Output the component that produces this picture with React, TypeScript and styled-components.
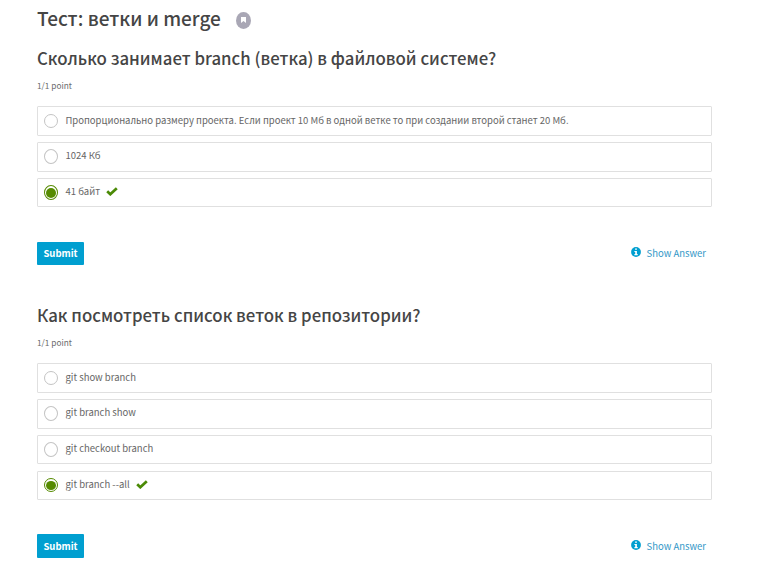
import React from "react";
import styled, { createGlobalStyle } from "styled-components";

const GlobalStyle = createGlobalStyle`
  * { box-sizing: border-box; }
  body {
    margin: 0;
    background: #fff;
    font-family: "Noto Sans CJK SC", "Noto Sans", sans-serif;
  }
  h2, h3, p { margin: 0; font-weight: 500; white-space: nowrap; }
`;

const Page = styled.main`
  width: 675px;
  margin-left: 37px;
`;
const TitleRow = styled.header`
  display: flex;
  align-items: center;
  height: 40px;
  gap: 15px;
`;
const Title = styled.h2`
  font-size: 19px;
  line-height: 36px;
  padding-bottom: 4px;
  color: #454545;
`;
const BookmarkBadge = styled.span`
  display: flex;
  align-items: center;
  justify-content: center;
  width: 15px;
  height: 17px;
  border-radius: 50%;
  background: #a9a7b5;
`;
const Problem = styled.section<{ $gap: number }>`
  padding-top: ${(p) => p.$gap}px;
`;
const Question = styled.h3`
  font-size: 16.8px;
  line-height: 27px;
  height: 27px;
  color: #454545;
  letter-spacing: 0.015px;
`;
const Points = styled.p`
  margin-top: 5px;
  height: 17px;
  font-size: 8.3px;
  line-height: 17px;
  font-weight: 400;
  color: #6c6c6c;
`;
const Choices = styled.div`
  display: flex;
  flex-direction: column;
  margin-top: 12px;
`;
const Choice = styled.label<{ $height: number }>`
  display: flex;
  align-items: center;
  height: ${(p) => p.$height}px;
  margin-bottom: ${(p) => 36 - p.$height}px;
  padding-left: 6px;
  border: 1px solid #e0e0e0;
  border-radius: 1px;
`;
const Radio = styled.span<{ $checked?: boolean; $height: number; $raise: number }>`
  display: flex;
  align-items: center;
  justify-content: center;
  width: 14px;
  height: ${(p) => p.$height}px;
  margin-bottom: ${(p) => p.$raise}px;
  flex: none;
  border: 1px solid ${(p) => (p.$checked ? "#568b00" : "#c4c4c4")};
  border-radius: 50%;
  &::after {
    content: "";
    width: 10px;
    height: ${(p) => p.$height - 5}px;
    border-radius: 50%;
    background: ${(p) => (p.$checked ? "#568b00" : "transparent")};
  }
`;
const ChoiceText = styled.span<{ $lift: number }>`
  margin-left: 7.5px;
  padding-bottom: ${(p) => p.$lift}px;
  font-size: 9.5px;
  line-height: 16px;
  color: #666;
  white-space: nowrap;
`;
const CheckSvg = styled.svg`
  margin-left: 6px;
  margin-bottom: 2px;
`;
const Actions = styled.footer<{ $gap: number }>`
  display: flex;
  align-items: center;
  justify-content: space-between;
  padding-right: 6px;
  margin-top: ${(p) => p.$gap}px;
`;
const Submit = styled.button<{ $height: number }>`
  width: 47px;
  height: ${(p) => p.$height}px;
  padding: 0 0 1px;
  border: 0;
  border-radius: 1px;
  background: #009fd0;
  color: #fff;
  font: 700 9.5px/22px "Noto Sans CJK SC", sans-serif;
`;
const ShowAnswer = styled.a`
  display: flex;
  align-items: center;
  gap: 5.4px;
  padding-bottom: 1px;
  font-size: 9.5px;
  line-height: 16px;
  color: #3498c8;
  white-space: nowrap;
`;
const InfoSvg = styled.svg`
  margin-bottom: 2px;
`;

const Check = () => (
  <CheckSvg width="12" height="9" viewBox="0 0 12 9">
    <path d="M1.2 4.3 4.3 7.2 10.8 1.3" fill="none" stroke="#4b8a06" strokeWidth="2.8" />
  </CheckSvg>
);
const Info = () => (
  <InfoSvg width="10" height="10" viewBox="0 0 10 10">
    <circle cx="5" cy="5" r="4.9" fill="#009fd0" />
    <path d="M4.1 1.4h1.8v1.4H4.1zM3.4 4h2.5v3.1h.8v1.1H3.4V7.1h.8v-2h-.8z" fill="#fff" />
  </InfoSvg>
);

type Option = {
  text: string;
  height: number;
  lift: number;
  radioHeight: number;
  raise?: number;
  checked?: boolean;
};
type Quiz = {
  gap: number;
  title: string;
  options: Option[];
  actionGap: number;
  submitHeight: number;
};

const quizzes: Quiz[] = [
  {
    gap: 5,
    title: "Сколько занимает branch (ветка) в файловой системе?",
    options: [
      {
        text: "Пропорционально размеру проекта. Если проект 10 Мб в одной ветке то при создании второй станет 20 Мб.",
        height: 30,
        lift: 3,
        radioHeight: 14,
      },
      { text: "1024 Кб", height: 30, lift: 5, radioHeight: 15, raise: 1 },
      { text: "41 байт", height: 29, lift: 4, radioHeight: 15, checked: true },
    ],
    actionGap: 28,
    submitHeight: 23,
  },
  {
    gap: 37,
    title: "Как посмотреть список веток в репозитории?",
    options: [
      { text: "git show branch", height: 30, lift: 3, radioHeight: 14 },
      { text: "git branch show", height: 30, lift: 5, radioHeight: 15, raise: 1 },
      { text: "git checkout branch", height: 29, lift: 4, radioHeight: 15 },
      { text: "git branch --all", height: 29, lift: 4, radioHeight: 14, raise: 1, checked: true },
    ],
    actionGap: 27,
    submitHeight: 24,
  },
];

export default function App() {
  return (
    <>
      <GlobalStyle />
      <Page>
        <TitleRow>
          <Title>Тест: ветки и merge</Title>
          <BookmarkBadge>
            <svg width="5" height="6" viewBox="0 0 5 6">
              <path d="M0 0h5v6L2.5 4 0 6z" fill="#fff" />
            </svg>
          </BookmarkBadge>
        </TitleRow>
        {quizzes.map((quiz) => (
          <Problem key={quiz.title} $gap={quiz.gap}>
            <Question>{quiz.title}</Question>
            <Points>1/1 point</Points>
            <Choices>
              {quiz.options.map((o) => (
                <Choice key={o.text} $height={o.height}>
                  <Radio $checked={o.checked} $height={o.radioHeight} $raise={o.raise ?? 0} />
                  <ChoiceText $lift={o.lift}>{o.text}</ChoiceText>
                  {o.checked && <Check />}
                </Choice>
              ))}
            </Choices>
            <Actions $gap={quiz.actionGap}>
              <Submit $height={quiz.submitHeight}>Submit</Submit>
              <ShowAnswer>
                <Info />
                Show Answer
              </ShowAnswer>
            </Actions>
          </Problem>
        ))}
      </Page>
    </>
  );
}
